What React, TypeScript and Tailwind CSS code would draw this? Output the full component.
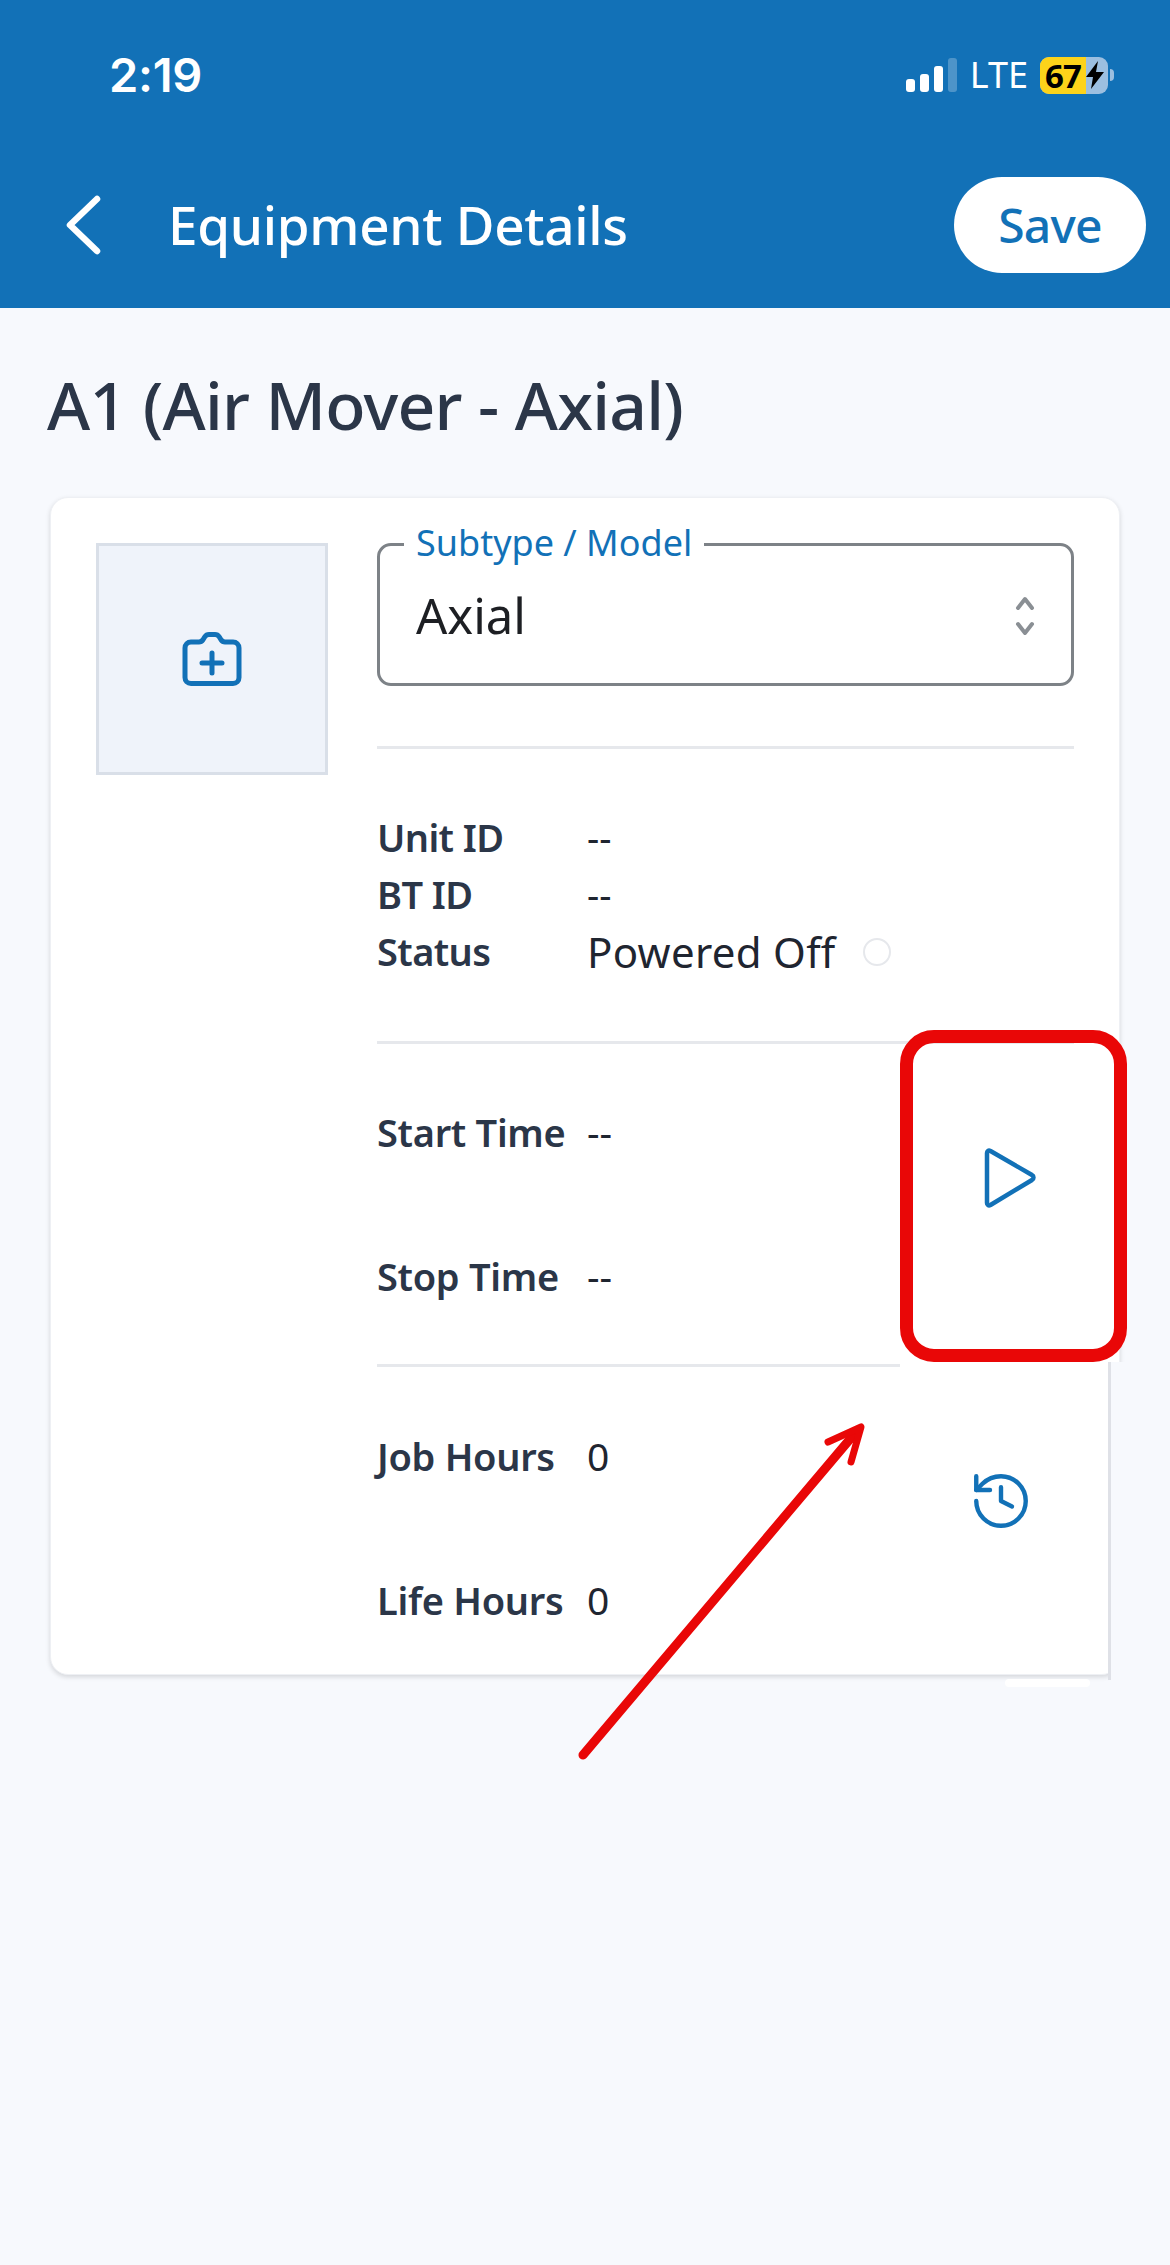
import { History } from "lucide-react"

const SignalBars = () => (
  <div className="flex items-end gap-[5px] h-[34px]">
    <div className="w-[9px] h-[13px] rounded-[3px] bg-white" />
    <div className="w-[9px] h-[18px] rounded-[3px] bg-white" />
    <div className="w-[9px] h-[26px] rounded-[3px] bg-white" />
    <div className="w-[9px] h-[34px] rounded-[3px] bg-white/25" />
  </div>
)

const Battery = () => (
  <div className="flex items-center gap-[2px]">
    <div className="flex h-[37px] w-[68px] items-center rounded-[9px] bg-[#9cbfe0]">
      <div className="flex h-full w-[46px] items-center justify-center rounded-l-[9px] bg-[#fdd31a]">
        <span className="text-[33px] font-bold leading-none tracking-[-1px] text-black">67</span>
      </div>
      <svg width="20" height="30" viewBox="0 0 20 30" className="ml-[-1px]">
        <path d="M13 1 1 17h7l-2 12L19 12h-8l2-11Z" fill="#000" />
      </svg>
    </div>
    <div className="h-[12px] w-[4px] rounded-r-full bg-[#9cbfe0]" />
  </div>
)

const Row = ({ label, value }: { label: string; value: string }) => (
  <div className="flex items-center">
    <span className="w-[210px] shrink-0 text-[38px] font-semibold leading-[57px] tracking-[-0.6px] text-[#2b3648]">{label}</span>
    <span className="text-[38px] leading-[57px] text-[#1f2530]">{value}</span>
  </div>
)

const TimeRow = ({ label, value }: { label: string; value: string }) => (
  <div className="flex h-[52px] items-center">
    <span className="w-[210px] shrink-0 text-[38px] font-semibold tracking-[-0.3px] text-[#2b3648]">{label}</span>
    <span className="text-[39px] text-[#1f2530]">{value}</span>
  </div>
)

export default function App() {
  return (
    <div className="relative h-[2265px] w-[1170px] overflow-hidden bg-[#f7f9fd] font-['Noto_Sans',sans-serif]">
      <header className="h-[308px] bg-[#1271b7] text-white">
        <div className="flex h-[177px] items-start justify-between pl-[109px] pr-[56px] pt-[52px]">
          <span className="font-['Inter',sans-serif] text-[47px] font-semibold leading-[46px] tracking-[-0.3px]">2:19</span>
          <div className="flex items-center pt-[3px]">
            <SignalBars />
            <span className="ml-[13px] text-[36px] font-normal leading-[40px]">LTE</span>
            <div className="ml-[12px]">
              <Battery />
            </div>
          </div>
        </div>
        <div className="flex h-[96px] items-center justify-between pl-[64px] pr-[24px]">
          <div className="flex items-center">
            <svg width="38" height="60" viewBox="0 0 38 60" fill="none" stroke="#fff" strokeWidth="6.5" strokeLinecap="round" strokeLinejoin="round">
              <path d="M33 4 6 30l27 26" />
            </svg>
            <h2 className="ml-[66px] mt-[-2px] text-[53px] font-medium leading-none tracking-[-0.3px]">Equipment Details</h2>
          </div>
          <button className="flex h-[96px] w-[192px] items-center justify-center rounded-full bg-white text-[48px] font-medium tracking-[-0.8px] text-[#1271b7]">Save</button>
        </div>
      </header>

      <main className="px-[50px]">
        <h1 className="ml-[-3px] mt-[52px] text-[66px] font-medium leading-[88px] tracking-[-0.8px] text-[#2b3648]">A1 (Air Mover - Axial)</h1>

        <section className="mt-[49px] flex h-[1178px] w-[1070px] rounded-[18px] border border-[#eef0f4] bg-white pl-[45px] pt-[45px] shadow-[0_2px_5px_rgba(0,0,0,0.14)]">
          <div className="flex h-[232px] w-[232px] shrink-0 items-center justify-center border-[3px] border-[#d9dfe8] bg-[#eff3fa]">
            <svg width="60" height="54" viewBox="0 0 60 54" fill="none" stroke="#1271b7" strokeWidth="5" strokeLinecap="round" strokeLinejoin="round">
              <path d="M9 10h8c2 0 3-.8 4-2.200l1.800-3C24 3 25 2.500 27 2.500h6c2 0 3 .5 4.200 2.300l1.800 3c1 1.400 2 2.200 4 2.200h8c3.500 0 6 2.500 6 6v29.500c0 3.500-2.500 6-6 6H9c-3.500 0-6-2.500-6-6V16c0-3.500 2.500-6 6-6Z" />
              <path d="M30 21v20M20 31h20" />
            </svg>
          </div>

          <div className="ml-[49px] w-[697px]">
            <div className="relative h-[143px] rounded-[14px] border-[3px] border-[#7d8287] pl-[36px] pt-[36px]">
              <span className="absolute left-[24px] top-[-26px] bg-white px-[12px] text-[36px] leading-[46px] text-[#1271b7]">Subtype / Model</span>
              <span className="block text-[49px] leading-[66px] text-[#1d1f23]">Axial</span>
              <svg width="22" height="40" viewBox="0 0 22 40" fill="none" stroke="#8a8f94" strokeWidth="4" strokeLinecap="round" strokeLinejoin="round" className="absolute right-[35px] top-[50px]">
                <path d="M4 12 11 3l7 9M4 28l7 9 7-9" />
              </svg>
            </div>

            <div className="mt-[60px] h-[3px] bg-[#e6e8ec]" />

            <div className="mt-[60px]">
              <Row label="Unit ID" value="--" />
              <Row label="BT ID" value="--" />
              <div className="flex items-center">
                <span className="w-[210px] shrink-0 text-[38px] font-semibold leading-[57px] tracking-[-0.6px] text-[#2b3648]">Status</span>
                <span className="text-[42px] leading-[57px] tracking-[0.3px] text-[#1f2530]">Powered Off</span>
                <span className="ml-[27px] h-[28px] w-[28px] rounded-full border-2 border-[#e6e8ec]" />
              </div>
            </div>

            <div className="mt-[61px] h-[3px] bg-[#e6e8ec]" />

            <div className="flex">
              <div className="w-[523px]">
                <div className="pt-[62px]">
                  <TimeRow label="Start Time" value="--" />
                  <div className="mt-[92px]">
                    <TimeRow label="Stop Time" value="--" />
                  </div>
                </div>
                <div className="mt-[62px] h-[3px] bg-[#e6e8ec]" />
                <div className="pt-[63px]">
                  <TimeRow label="Job Hours" value="0" />
                  <div className="mt-[92px]">
                    <TimeRow label="Life Hours" value="0" />
                  </div>
                </div>
              </div>
              <div className="ml-[84px] flex flex-col items-start pt-[104px]">
                <svg width="52" height="60" viewBox="0 0 52 60" fill="none" stroke="#1271b7" strokeWidth="4.500" strokeLinejoin="round">
                  <path d="M3 5c0-2 1.500-3 3.500-2L48 27c2 1 2 4 0 5L6.500 57C4.500 58 3 57 3 55Z" />
                </svg>
                <History size={66} color="#1271b7" strokeWidth={1.600} className="ml-[-16px] mt-[260px]" />
              </div>
            </div>
          </div>
        </section>
      </main>

      {/* annotation: patch over the card edge, red box and arrow */}
      <div className="absolute left-[1108px] top-[1362px] h-[318px] w-[30px] border-l-[3px] border-[#dfe1e7] bg-[#f7f9fd]" />
      <div className="absolute left-[1005px] top-[1679px] h-[8px] w-[85px] rounded-full bg-white" />
      <div className="absolute left-[900px] top-[1030px] h-[332px] w-[227px] rounded-[34px] border-[13px] border-[#e90707]" />
      <svg width="300" height="350" viewBox="0 0 300 350" fill="none" stroke="#e90707" strokeLinecap="round" strokeLinejoin="round" className="absolute left-[570px] top-[1418px]">
        <path d="M13 337 286 14" strokeWidth="9" />
        <path d="M258 24 291 9 281 44" strokeWidth="7" />
      </svg>
    </div>
  )
}
